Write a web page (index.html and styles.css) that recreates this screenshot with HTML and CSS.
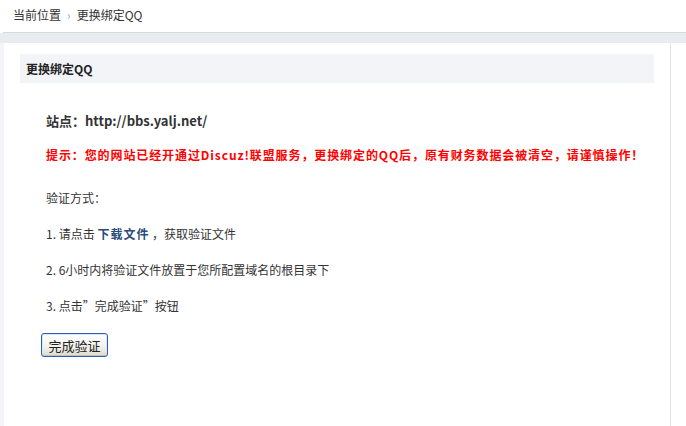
FILE: index.html
```html
<!DOCTYPE html>
<html lang="zh-CN">
<head>
<meta charset="utf-8">
<title>更换绑定QQ</title>
<link rel="stylesheet" href="styles.css">
</head>
<body>
<div class="topbar">
  <span class="crumb">当前位置</span><span class="sep">›</span><span class="crumb">更换绑定QQ</span>
</div>
<div class="band"></div>
<div class="main">
  <div class="panel">
    <div class="title">更换绑定QQ</div>
    <div class="content">
      <p class="site">站点：http://bbs.yalj.net/</p>
      <p class="warn">提示：您的网站已经开通过Discuz!联盟服务，更换绑定的QQ后，原有财务数据会被清空，请谨慎操作！</p>
      <p class="step first">验证方式：</p>
      <p class="step">1. 请点击 <a class="link" href="#">下载文件</a> ，获取验证文件</p>
      <p class="step">2. 6小时内将验证文件放置于您所配置域名的根目录下</p>
      <p class="step">3. 点击”完成验证”按钮</p>
      <button class="btn" type="button">完成验证</button>
    </div>
  </div>
</div>
</body>
</html>
```
FILE: styles.css
```css
html, body {
  margin: 0;
  padding: 0;
  height: 100%;
}
body {
  background: #ffffff;
  font-family: "Noto Sans CJK SC", "Liberation Sans", sans-serif;
  font-size: 12px;
  color: #333333;
  display: flex;
  flex-direction: column;
}
.topbar {
  height: 33px;
  box-sizing: border-box;
  margin-left: 3px;
  padding-left: 10px;
  background: #ffffff;
  border-bottom: 1px solid #d6dadf;
  box-shadow: 0 1px 0 #dfe3e7;
  display: flex;
  align-items: center;
  line-height: 16px;
  padding-bottom: 3px;
}
.sep {
  color: #a0a4a8;
  margin: 0 6px;
}
.band {
  height: 10px;
  background: #e8ecf0;
}
.main {
  flex: 1;
  display: flex;
  background: #f4f5f8;
}
.panel {
  margin-left: 4px;
  width: 667px;
  box-sizing: border-box;
  background: #ffffff;
  border-right: 1px solid #e1e4e9;
  padding: 11px 16px 0 16px;
}
.main::after {
  content: "";
  flex: 1;
  background: #ffffff;
}
.title {
  height: 29px;
  background: #f3f4f8;
  padding-left: 6px;
  font-weight: bold;
  line-height: 29px;
  color: #222222;
}
.content {
  padding: 28px 0 0 26px;
}
.content p {
  margin: 0;
  line-height: 20px;
}
.site {
  font-weight: bold;
  font-size: 13px;
  color: #333333;
}
.warn {
  margin-top: 14px !important;
  font-weight: bold;
  color: #ff0000;
  letter-spacing: 0.9px;
}
.step.first {
  margin-top: 23px !important;
}
.step {
  margin-top: 16px !important;
}
.link {
  color: #2a4c78;
  font-weight: bold;
  text-decoration: none;
  letter-spacing: 1px;
}
.btn {
  margin: 17px 0 0 -5px;
  width: 67px;
  height: 24px;
  border: 1px solid #2d5fae;
  border-radius: 3px;
  background: linear-gradient(#ffffff, #f2f1ea 60%, #dddbcf);
  box-shadow: inset 0 -1px 0 #c7c2ad, inset 0 0 0 1px #d9e6fb;
  font-family: "Noto Sans CJK SC", sans-serif;
  font-size: 13px;
  color: #222222;
  padding: 0;
  line-height: 21px;
}
```
